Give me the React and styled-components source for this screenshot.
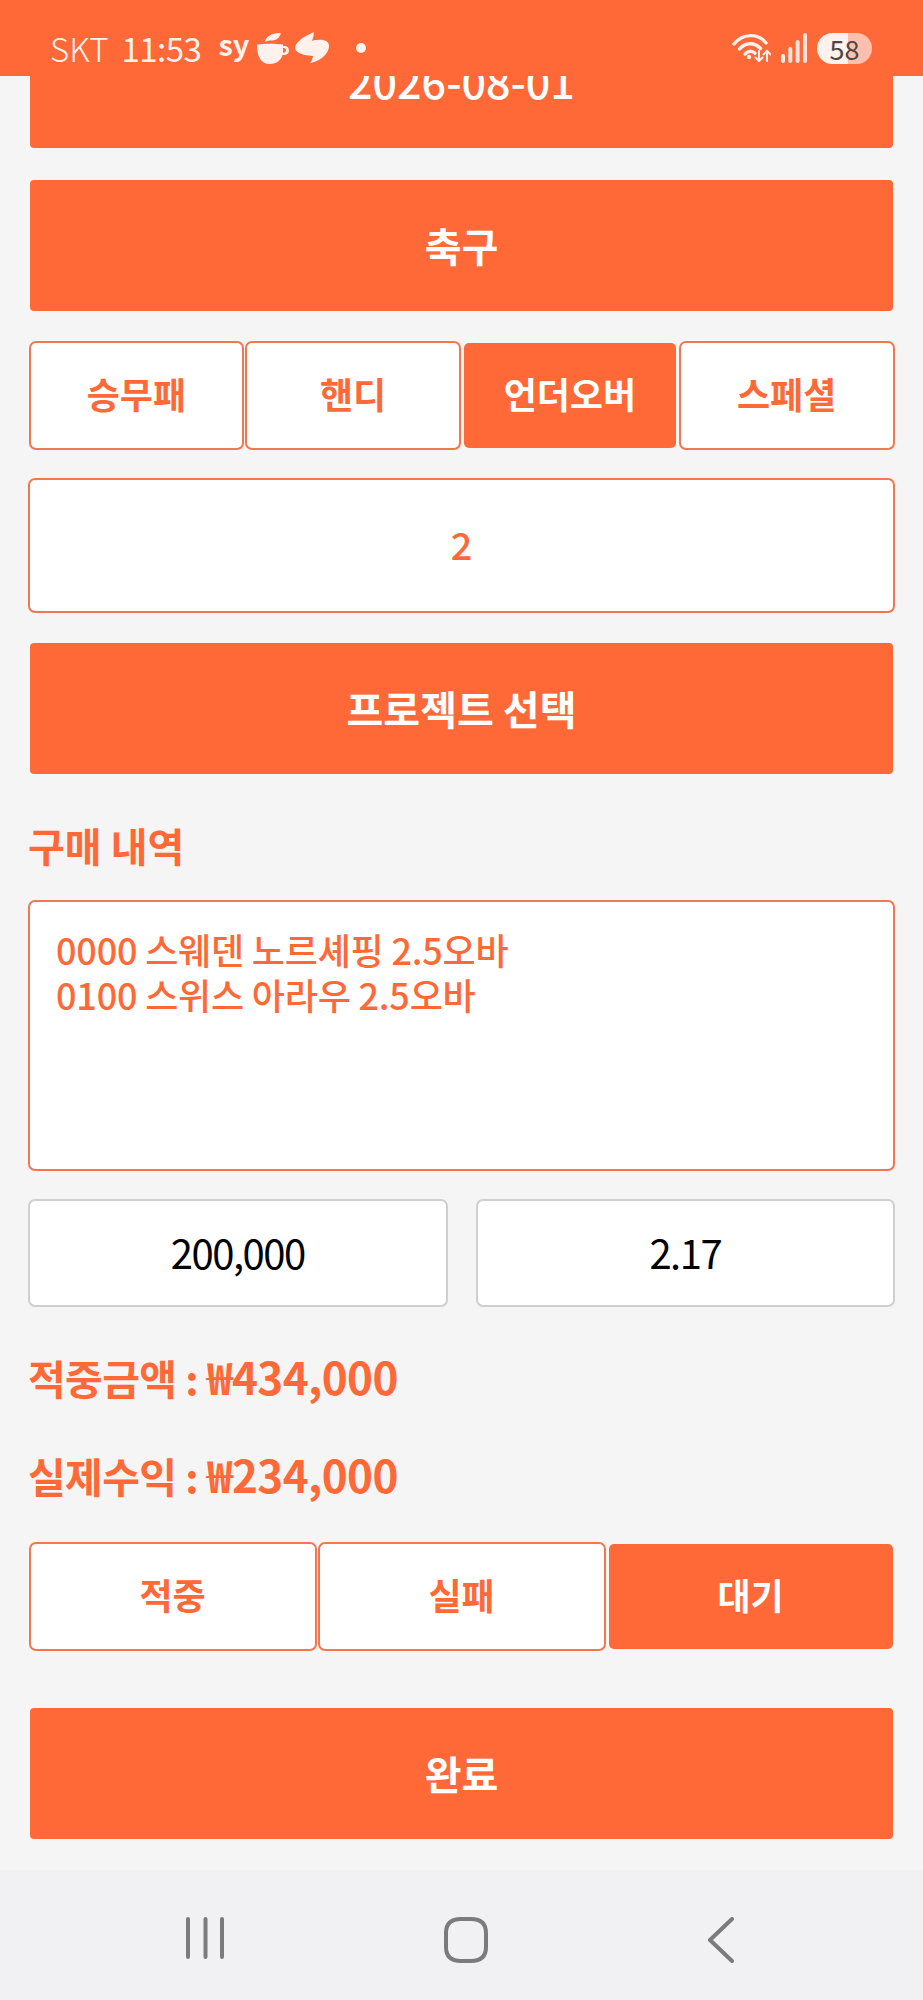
import React from "react";
import styled, { createGlobalStyle } from "styled-components";

const ORANGE = "#ff6938";
const LINE = "#f2774f";

const tabs = ["승무패", "핸디", "언더오버", "스페셜"];
const results = ["적중", "실패", "대기"];

const GlobalStyle = createGlobalStyle`
  html, body {
    margin: 0;
    padding: 0;
    background: #f5f5f5;
    font-family: "Noto Sans CJK KR", "Noto Sans", sans-serif;
  }
`;

const Screen = styled.div`
  position: relative;
  width: 923px;
  height: 2000px;
  overflow: hidden;
  display: flex;
  flex-direction: column;
  background: #f5f5f5;
`;

const StatusBar = styled.div`
  position: absolute;
  top: 0;
  left: 0;
  right: 0;
  height: 76px;
  padding: 20px 51px 0 50px;
  box-sizing: border-box;
  display: flex;
  align-items: center;
  background: ${ORANGE};
  color: #fff1ec;
`;

const Carrier = styled.span`
  font-size: 33px;
  font-weight: 300;
  line-height: 34px;
  margin-right: 13px;
`;

const Clock = styled.span`
  font-size: 33px;
  font-weight: 400;
  letter-spacing: -0.5px;
  line-height: 34px;
  margin-right: 17px;
`;

const SyLabel = styled.span`
  font-size: 29px;
  font-weight: 700;
  line-height: 30px;
  margin-right: 8px;
  margin-top: -10px;
`;

const AppIcons = styled.div`
  display: flex;
  align-items: center;
  gap: 6px;
`;

const Dot = styled.span`
  width: 10px;
  height: 10px;
  border-radius: 50%;
  background: #fff1ec;
  margin-left: 26px;
`;

const StatusIcons = styled.div`
  margin-left: auto;
  display: flex;
  align-items: center;
  gap: 10px;
`;

const Battery = styled.div`
  width: 55px;
  height: 31px;
  border-radius: 16px;
  display: flex;
  align-items: center;
  justify-content: center;
  font-size: 27px;
  font-weight: 400;
  color: #4c4744;
  background: linear-gradient(to right, #fff1ec 57%, #ffbfae 57%);
`;

const Content = styled.div`
  flex: 1;
  padding: 15px 28px 0;
  display: flex;
  flex-direction: column;
  gap: 28px;
`;

const BigButton = styled.button`
  flex: none;
  height: 135px;
  border: 2px solid transparent;
  background: ${ORANGE};
  background-clip: padding-box;
  border-radius: 6px;
  color: #fff;
  font-family: inherit;
  font-size: 40px;
  font-weight: 700;
  padding: 0 0 1px;
`;

const DateButton = styled(BigButton)`
  font-size: 43px;
  font-weight: 500;
  padding-bottom: 5px;
`;

const ButtonRow = styled.div`
  flex: none;
  height: 109px;
  display: flex;
`;

const Toggle = styled.button`
  flex: 1;
  margin: 0 0.5px;
  border: 2px solid ${(p) => (p.$active ? "transparent" : LINE)};
  background: ${(p) => (p.$active ? ORANGE : "#fff")};
  background-clip: padding-box;
  border-radius: 7px;
  color: ${(p) => (p.$active ? "#fff" : ORANGE)};
  font-family: inherit;
  font-size: 36px;
  font-weight: 700;
  padding: 0 0 5px;
`;

const ValueField = styled.div`
  flex: none;
  height: 135px;
  box-sizing: border-box;
  border: 2px solid ${LINE};
  border-radius: 7px;
  background: #fff;
  color: ${ORANGE};
  font-size: 38px;
  font-weight: 500;
  padding-bottom: 5px;
  display: flex;
  align-items: center;
  justify-content: center;
`;

const SectionTitle = styled.div`
  flex: none;
  height: 68px;
  color: ${ORANGE};
  font-size: 40px;
  font-weight: 700;
  line-height: 44px;
  padding-top: 19px;
  box-sizing: border-box;
`;

const HistoryBox = styled.div`
  flex: none;
  height: 271px;
  box-sizing: border-box;
  padding: 25px 26px;
  border: 2px solid ${LINE};
  border-radius: 7px;
  background: #fff;
  color: ${ORANGE};
  font-size: 36px;
  font-weight: 500;
  line-height: 45px;
  letter-spacing: -0.2px;
`;

const AmountRow = styled.div`
  flex: none;
  display: grid;
  grid-template-columns: 1fr 1fr;
  gap: 28px;
`;

const AmountField = styled.div`
  height: 108px;
  box-sizing: border-box;
  border: 2px solid #cfcfcf;
  border-radius: 7px;
  background: #fff;
  color: #000;
  font-size: 40px;
  font-weight: 400;
  letter-spacing: -1.5px;
  padding-bottom: 2px;
  display: flex;
  align-items: center;
  justify-content: center;
`;

const Summary = styled.div`
  flex: none;
  height: 179px;
  display: flex;
  flex-direction: column;
  gap: 53px;
  padding-top: 19px;
  box-sizing: border-box;
`;

const SummaryLine = styled.div`
  color: ${ORANGE};
  font-size: 41px;
  font-weight: 700;
  line-height: 44px;
  letter-spacing: -0.6px;
`;

const Money = styled.span`
  font-size: 44px;
  font-weight: 600;
`;

const FinishButton = styled(BigButton)`
  margin-top: 27px;
`;

const NavBar = styled.div`
  flex: none;
  height: 130px;
  background: #f1f1f3;
`;

const NavIcons = styled.div`
  height: 100%;
  padding: 47px 188px 0 186px;
  box-sizing: border-box;
  display: flex;
  align-items: flex-start;
  justify-content: space-between;
`;

const CoffeeIcon = () => (
  <svg width="32" height="31" viewBox="0 0 32 31" fill="#fff1ec">
    <path d="M8 9c.5-5 6-9 15-9 .5 0 .8.400.6 1C22 6 18 7.500 14 7.600c-2 0-4 .5-6 1.400z" />
    <path d="M0 11.500c8-1 18-1 26 0v1.700c3-1 6 1 6 4.300 0 3.300-3 5.300-6.500 4.300C24 27 20 31 13 31 4 31 0 24 0 11.500zm26 3.500v4.500c1.600.5 3-.5 3-2.200s-1.400-2.800-3-2.300z" />
  </svg>
);

const SwirlIcon = () => (
  <svg width="35" height="32" viewBox="0 0 35 32" fill="#fff1ec">
    <path d="M19 0C12 3 2 8 0 15c0 5 5 8 18 9-.5 3-1.500 5-3 7 9-1 19-9 19-17 0-5-5-7-12-6-2 0-4 0-5 1 1-3 2-6 2-9z" />
  </svg>
);

const WifiIcon = () => (
  <svg width="39" height="30" viewBox="0 0 39 30" fill="none" stroke="#fff1ec" strokeLinecap="round">
    <path d="M2 11C11 0 26 0 34 10" strokeWidth="3.400" />
    <path d="M7.500 16c6-7 15-7 21-.5" strokeWidth="3.400" />
    <path d="M13 21c3.500-3.500 7-3.500 10-.8" strokeWidth="3.400" />
    <circle cx="17" cy="24" r="2.200" fill="#fff1ec" stroke="none" />
    <path d="M27 18v10m-3.500-3.500L27 28l3.500-3.500M35 28V18m-3.500 3.500L35 18l3.500 3.500" strokeWidth="2" />
  </svg>
);

const SignalIcon = () => (
  <svg width="26" height="30" viewBox="0 0 26 30" fill="#fff1ec">
    <rect x="0" y="21" width="4" height="9" rx="2" />
    <rect x="7.300" y="14" width="4" height="16" rx="2" opacity="0.9" />
    <rect x="14.600" y="7" width="4" height="23" rx="2" opacity="0.9" />
    <rect x="22" y="0" width="4" height="30" rx="2" opacity="0.9" />
  </svg>
);

const RecentsIcon = () => (
  <svg width="38" height="42" viewBox="0 0 38 42" stroke="#7b7b7d" strokeWidth="4" strokeLinecap="round">
    <path d="M2 2v38M19.500 2v38M36 2v38" />
  </svg>
);

const HomeIcon = () => (
  <svg width="44" height="46" viewBox="0 0 44 46" fill="none" stroke="#7b7b7d" strokeWidth="4">
    <path d="M17 2h10c10 0 15 5 15 14v14c0 9-5 14-15 14H17C7 44 2 39 2 30V16C2 7 7 2 17 2z" />
  </svg>
);

const BackIcon = () => (
  <svg width="28" height="46" viewBox="0 0 28 46" fill="none" stroke="#7b7b7d" strokeWidth="4" strokeLinecap="round" strokeLinejoin="round">
    <path d="M25 2 3 23l22 21" />
  </svg>
);

const App = () => {
  return (
    <Screen>
      <GlobalStyle />
      <Content>
        <DateButton>2026-08-01</DateButton>
        <BigButton>축구</BigButton>
        <ButtonRow>
          {tabs.map((tab) => (
            <Toggle key={tab} $active={tab === "언더오버"}>
              {tab}
            </Toggle>
          ))}
        </ButtonRow>
        <ValueField>2</ValueField>
        <BigButton>프로젝트 선택</BigButton>
        <SectionTitle>구매 내역</SectionTitle>
        <HistoryBox>
          0000 스웨덴 노르셰핑 2.5오바
          <br />
          0100 스위스 아라우 2.5오바
        </HistoryBox>
        <AmountRow>
          <AmountField>200,000</AmountField>
          <AmountField>2.17</AmountField>
        </AmountRow>
        <Summary>
          <SummaryLine>
            적중금액 : <Money>₩434,000</Money>
          </SummaryLine>
          <SummaryLine>
            실제수익 : <Money>₩234,000</Money>
          </SummaryLine>
        </Summary>
        <ButtonRow>
          {results.map((result) => (
            <Toggle key={result} $active={result === "대기"}>
              {result}
            </Toggle>
          ))}
        </ButtonRow>
        <FinishButton>완료</FinishButton>
      </Content>
      <NavBar>
        <NavIcons>
          <RecentsIcon />
          <HomeIcon />
          <BackIcon />
        </NavIcons>
      </NavBar>
      <StatusBar>
        <Carrier>SKT</Carrier>
        <Clock>11:53</Clock>
        <SyLabel>sy</SyLabel>
        <AppIcons>
          <CoffeeIcon />
          <SwirlIcon />
        </AppIcons>
        <Dot />
        <StatusIcons>
          <WifiIcon />
          <SignalIcon />
          <Battery>58</Battery>
        </StatusIcons>
      </StatusBar>
    </Screen>
  );
};

export default App;
